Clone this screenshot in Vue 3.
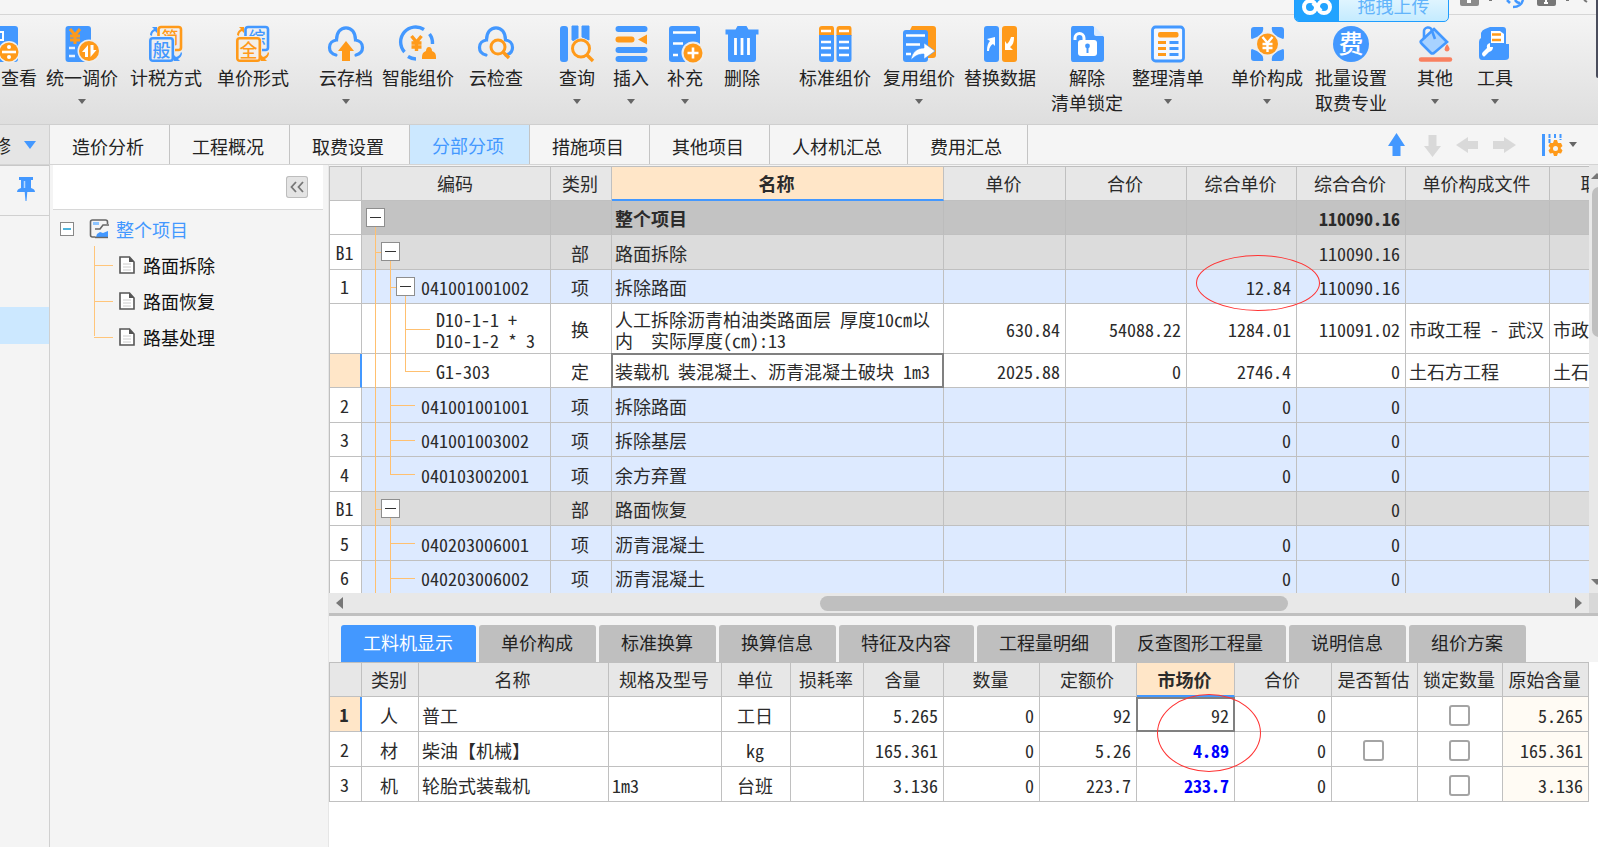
<script setup>
import { ref } from 'vue'

const B = '#4398ff'
const O = '#ff9a1a'
const yen = (x, y, c, w = 2) =>
  `<path d="M${x - 5} ${y - 7}l5 6l5 -6M${x} ${y - 1}v9M${x - 5} ${y}h10M${x - 5} ${y + 4}h10" fill="none" stroke="${c}" stroke-width="${w}"/>`
const glyph = (x, y, size, c, t) =>
  `<text x="${x}" y="${y}" font-size="${size}" fill="${c}" text-anchor="middle" font-weight="500" font-family="Noto Sans CJK SC, sans-serif">${t}</text>`
const cloud = `<path d="M8 29C3.500 28 1.500 25 1.500 21.500C1.500 17.500 4.500 14.500 8.500 14C8.500 6.500 12.500 1.800 18 1.800S27.500 6.500 27.500 14C31.500 14.500 34.500 17.500 34.500 21.500C34.500 25 32 28 28 29" fill="none" stroke="${B}" stroke-width="3.200" stroke-linecap="round"/>`

const art = {
  view: `<rect x="1" width="34" height="36" rx="3" fill="${B}"/><path d="M14 6h6v8h-6" fill="none" stroke="#fff" stroke-width="2"/><circle cx="26" cy="26" r="11" fill="#f0f0f0"/><circle cx="26" cy="26" r="9.500" fill="${O}"/><path d="M19 26h14" stroke="#fff" stroke-width="2.600"/><circle cx="26" cy="21" r="2" fill="#fff"/><circle cx="26" cy="31" r="2" fill="#fff"/>`,
  adjust: `<rect x="1.500" width="25.500" height="36" rx="3" fill="${B}"/>${yen(11, 10, O, 3)}<path d="M5 22h6M5 30h6" stroke="#e6f1ff" stroke-width="2.400"/><circle cx="25" cy="25" r="11.500" fill="#eee"/><circle cx="25" cy="25" r="10" fill="${O}"/><path d="M24 31v-12l-6 7h3v5zM26.500 19v12l6 -7h-3v-5z" fill="#fff"/>`,
  tax: `<rect x="10.500" y="1" width="22.500" height="23" rx="2.500" fill="none" stroke="${O}" stroke-width="2.600"/>${glyph(22, 18, 17, O, '简')}<rect x="0" y="10" width="27" height="26" rx="3" fill="#ececec"/><rect x="2.300" y="12.300" width="22.500" height="22.500" rx="2.500" fill="#eee" stroke="${B}" stroke-width="2.600"/>${glyph(13.5, 30.5, 18, B, '般')}<path d="M2 9c0-3 2-5 4-6l-2-2l5 0v6l-2-2c-2 1-3 2-3 5zM34 27c0 3-2 5-4 6l2 2h-6v-6l2 2c3-1 4-2 5-5z" fill="${B}"/>`,
  price: `<rect x="10.500" y="1" width="22.500" height="23" rx="2.500" fill="none" stroke="${B}" stroke-width="2.600"/>${glyph(22, 18, 17, B, '综')}<rect x="0" y="10" width="27" height="26" rx="3" fill="#ececec"/><rect x="2.300" y="12.300" width="22.500" height="22.500" rx="2.500" fill="#f3efe8" stroke="${O}" stroke-width="2.600"/>${glyph(13.5, 30.5, 18, O, '全')}<path d="M2 9c0-3 2-5 4-6l-2-2l5 0v6l-2-2c-2 1-3 2-3 5zM34 27c0 3-2 5-4 6l2 2h-6v-6l2 2c3-1 4-2 5-5z" fill="${O}"/>`,
  cloudUp: `${cloud}<path d="M18 15l8 10h-4v10h-8v-10h-4z" fill="${O}"/>`,
  smart: `<path d="M4.500 26A15 15 0 0 1 24 3.500M29.500 8A15 15 0 0 1 32.500 18M8 30.500A15 15 0 0 0 16 33" fill="none" stroke="${B}" stroke-width="3.400"/>${yen(16.5, 17, O, 3.4)}<path d="M29 21c2 0 3 2 3 4c3 1 4 3 4 6v2h-14v-2c0-3 1-5 4-6c0-2 1-4 3-4z" fill="${O}"/>`,
  cloudFind: `${cloud}<circle cx="20" cy="21" r="8.500" fill="#eee"/><circle cx="20" cy="21" r="7" fill="none" stroke="${O}" stroke-width="3"/><path d="M25 26l6 6" stroke="${O}" stroke-width="3.400"/>`,
  query: `<rect x="1" width="8" height="36" rx="3" fill="${B}"/><path d="M13 0h6v16l-6-2zM23 0h7v14l-7-3z" fill="${B}" stroke="${B}"/><circle cx="22" cy="22.500" r="10.500" fill="#eee"/><circle cx="22" cy="22.500" r="8.500" fill="none" stroke="${O}" stroke-width="3"/><path d="M28 29l6 6" stroke="${O}" stroke-width="3.400"/>`,
  insert: `<path d="M5.500 3h26M5.500 24h26M5.500 33h26" stroke="${B}" stroke-width="6" stroke-linecap="round"/><path d="M5.500 13.500h13" stroke="${O}" stroke-width="6" stroke-linecap="round"/><path d="M25 13.500l9 -5v10z" fill="${O}"/>`,
  append: `<rect x="2" width="31" height="36" rx="3" fill="${B}"/><path d="M6 6.500h23M6 17.500h10M6 29h5" stroke="#fff" stroke-width="2.600"/><circle cx="26" cy="27" r="11.500" fill="#eee"/><circle cx="26" cy="27" r="9.500" fill="${O}"/><path d="M20.500 27h11M26 21.500v11" stroke="#fff" stroke-width="2.600"/>`,
  remove: `<path d="M1.500 3.500h10l2-3.500h9l2 3.500h10v5h-33zM4 8h28v25q0 3 -3 3h-22q-3 0 -3 -3z" fill="${B}"/><path d="M11.500 12v17M18 12v17M24.500 12v17" stroke="#fff" stroke-width="2.800"/>`,
  standard: `<path d="M2 10v-7q0-3 3-3h10q2 0 2 3v7zM19.500 10v-7q0-3 3-3h10q2 0 2 3v7z" fill="${O}"/><path d="M2 9h15v24q0 3 -2 3h-10q-3 0 -3-3zM19.500 9h15v24q0 3 -2 3h-10q-3 0 -3-3z" fill="${B}"/><path d="M4 5h10M22 5h10M4 16h10M22 16h10M4 22h10M22 22h10M4 29h10M22 29h10" stroke="#fff" stroke-width="2.400"/>`,
  reuse: `<path d="M11 0h21q3 0 3 3v26q0 3 -3 3h-10v-26h-14z" fill="${O}"/><rect x="2" y="4" width="25" height="32" rx="3" fill="${B}"/><path d="M5 9.500h19M5 18.500h14M5 28h5" stroke="#fff" stroke-width="2.400"/><path d="M10 34c1-8 6-12 13-12v-5l11 8l-11 8v-5c-6 0-9 2-13 6z" fill="#fff" stroke="${B}" stroke-width=".6"/>`,
  replace: `<rect x="2" width="15" height="36" rx="3" fill="${B}"/><rect x="20" width="15" height="36" rx="3" fill="${O}"/><path d="M5 25c0-5 1-8 3-10l-3-2l8-2v9l-2-2c-2 1-4 4-4 7zM32 11c0 5-1 8-4 10l3 3h-8v-9l2 3c2-2 3-4 4-7z" fill="#fff"/>`,
  unlock: `<path d="M4 0h20l11 11v22q0 3-3 3h-28q-2 0-2-3v-30q0-3 2-3z" fill="${B}"/><path d="M25 0l10 10h-8q-2 0-2-2z" fill="#dcecff"/><path d="M15 16v-4a4.500 4.500 0 0 0 -9 0v2" fill="none" stroke="#fff" stroke-width="3"/><rect x="9" y="14" width="19" height="16" rx="3" fill="#fff"/><circle cx="18.500" cy="20" r="2.400" fill="${B}"/><path d="M18.500 20v7" stroke="${B}" stroke-width="2"/>`,
  tidy: `<rect x="2.500" y="1" width="31" height="34" rx="3" fill="#f4f8ff" stroke="${B}" stroke-width="2.800"/><rect x="8" y="6" width="20.500" height="5.500" rx="2" fill="${O}"/><path d="M8 16.500h8M8 22.500h8M8 28.500h8" stroke="${O}" stroke-width="2.800"/><path d="M19.500 16.500h9M19.500 22.500h9M19.500 28.500h9" stroke="${B}" stroke-width="2.800"/>`,
  compose: `<path d="M5 1h9q2 8-11 12q-1 0-1-2v-7q0-3 3-3zM32 1h-9q-2 8 11 12q1 0 1-2v-7q0-3-3-3zM5 35h9q2-8-11-12q-1 0-1 2v7q0 3 3 3zM32 35h-9q-2-8 11-12q1 0 1 2v7q0 3-3 3z" fill="${B}"/><circle cx="18.500" cy="18" r="12" fill="#eee"/><circle cx="18.500" cy="18" r="10.500" fill="${O}"/>${yen(18.5, 18, '#fff', 2.4)}`,
  fee: `<circle cx="18" cy="18" r="18" fill="${B}"/>${glyph(18, 26.5, 25, '#fff', '费')}`,
  other: `<path d="M17 3l13 13l-13 11q-2 1-3 0l-9-9q-2-2-1-3z" fill="#a8d2ff" stroke="${B}" stroke-width="2.600"/><path d="M7 13v-7a4 4 0 0 1 8-1l3 8" fill="none" stroke="${B}" stroke-width="2.600"/><path d="M30 18q3 4 2.500 5.500a2.600 2.600 0 0 1 -5 0q0-2 2.500-5.500z" fill="#f9805f"/><path d="M4 33.500h29" stroke="#f9805f" stroke-width="4.400" stroke-linecap="round"/>`,
  tool: `<path d="M4 7q1-3 4-4l5-2h13q3 0 3 3v14h3v13q0 3-4 3h-23q-3 0-3-4v-14q0-3 2-4z" fill="${B}"/><path d="M14 5h9l4 3v9h-13z" fill="#fff"/><path d="M15 8.500h9M15 14h9" stroke="${O}" stroke-width="2.600"/><path d="M6 30q-2-2 0-4l4-4q-1-4 3-5v4h3q0 4-4 5l-4 4q-1 1-2 0z" fill="#fff"/>`,
}

const ribbon = [
  { icon: 'view', lines: ['查看'], gap: 'cut' },
  { icon: 'adjust', lines: ['统一调价'], caret: true, gap: 'g9' },
  { icon: 'tax', lines: ['计税方式'], gap: 'g12' },
  { icon: 'price', lines: ['单价形式'], gap: 'g15' },
  { icon: 'cloudUp', lines: ['云存档'], caret: true, gap: 'g30' },
  { icon: 'smart', lines: ['智能组价'], gap: 'g9' },
  { icon: 'cloudFind', lines: ['云检查'], gap: 'g15' },
  { icon: 'query', lines: ['查询'], caret: true, gap: 'g36' },
  { icon: 'insert', lines: ['插入'], caret: true, gap: 'g18' },
  { icon: 'append', lines: ['补充'], caret: true, gap: 'g18' },
  { icon: 'remove', lines: ['删除'], gap: 'g21' },
  { icon: 'standard', lines: ['标准组价'], gap: 'g39' },
  { icon: 'reuse', lines: ['复用组价'], caret: true, gap: 'g12' },
  { icon: 'replace', lines: ['替换数据'], gap: 'g9' },
  { icon: 'unlock', lines: ['解除', '清单锁定'], gap: 'g15' },
  { icon: 'tidy', lines: ['整理清单'], caret: true, gap: 'g9' },
  { icon: 'compose', lines: ['单价构成'], caret: true, gap: 'g27' },
  { icon: 'fee', lines: ['批量设置', '取费专业'], gap: 'g12' },
  { icon: 'other', lines: ['其他'], caret: true, gap: 'g30' },
  { icon: 'tool', lines: ['工具'], caret: true, gap: 'g24' },
]

const tabs = ['造价分析', '工程概况', '取费设置', '分部分项', '措施项目', '其他项目', '人材机汇总', '费用汇总']
const activeTab = ref('分部分项')

const children = ['路面拆除', '路面恢复', '路基处理']

const mainCols = ['', '编码', '类别', '名称', '单价', '合价', '综合单价', '综合合价', '单价构成文件', '取费']
// lines: tree guides of the code cell; box: depth of the collapse button
const rows = [
  { no: '', kind: 'total', box: 1, lines: ['v1 low'], name: '整个项目', sum: '110090.16' },
  { no: 'B1', kind: 'part', box: 2, lines: ['v1', 'h1 short', 'v2 low'], type: '部', name: '路面拆除', sum: '110090.16' },
  { no: '1', kind: 'item', box: 3, lines: ['v1', 'v2', 'h2 short', 'v3 low'], depth: 2, code: '041001001002', type: '项', name: '拆除路面', unit: '12.84', sum: '110090.16', mark: true },
  { no: '', kind: 'quota tall', lines: ['v1', 'v2', 'v3', 'h3'], depth: 3, code: 'D10-1-1 +\nD10-1-2 * 3', type: '换', name: '人工拆除沥青柏油类路面层 厚度10㎝以\n内  实际厚度(㎝):13', price: '630.84', amount: '54088.22', unit: '1284.01', sum: '110091.02', file: '市政工程 - 武汉', major: '市政工程' },
  { no: '', kind: 'quota current', lines: ['v1', 'v2', 'v3 high', 'h3'], depth: 3, code: 'G1-303', type: '定', name: '装载机 装混凝土、沥青混凝土破块 1m3', price: '2025.88', amount: '0', unit: '2746.4', sum: '0', file: '土石方工程', major: '土石方工程' },
  { no: '2', kind: 'item', lines: ['v1', 'v2', 'h2'], depth: 2, code: '041001001001', type: '项', name: '拆除路面', unit: '0', sum: '0' },
  { no: '3', kind: 'item', lines: ['v1', 'v2', 'h2'], depth: 2, code: '041001003002', type: '项', name: '拆除基层', unit: '0', sum: '0' },
  { no: '4', kind: 'item', lines: ['v1', 'v2 high', 'h2'], depth: 2, code: '040103002001', type: '项', name: '余方弃置', unit: '0', sum: '0' },
  { no: 'B1', kind: 'part', box: 2, lines: ['v1', 'h1 short', 'v2 low'], type: '部', name: '路面恢复', sum: '0' },
  { no: '5', kind: 'item', lines: ['v1', 'v2', 'h2'], depth: 2, code: '040203006001', type: '项', name: '沥青混凝土', unit: '0', sum: '0' },
  { no: '6', kind: 'item', lines: ['v1', 'v2', 'h2'], depth: 2, code: '040203006002', type: '项', name: '沥青混凝土', unit: '0', sum: '0' },
]

const detailTabs = ['工料机显示', '单价构成', '标准换算', '换算信息', '特征及内容', '工程量明细', '反查图形工程量', '说明信息', '组价方案']
const activeDetail = ref('工料机显示')
const detailCols = ['', '类别', '名称', '规格及型号', '单位', '损耗率', '含量', '数量', '定额价', '市场价', '合价', '是否暂估', '锁定数量', '原始含量']
const details = ref([
  { no: 1, type: '人', name: '普工', spec: '', unit: '工日', content: '5.265', quota: '92', market: '92', locked: false },
  { no: 2, type: '材', name: '柴油【机械】', spec: '', unit: 'kg', content: '165.361', quota: '5.26', market: '4.89', estimate: false, locked: false },
  { no: 3, type: '机', name: '轮胎式装载机', spec: '1m3', unit: '台班', content: '3.136', quota: '223.7', market: '233.7', locked: false },
])
</script>

<template>
  <div class="app">
    <header class="titlebar">
      <svg class="sysicons" viewBox="0 0 148 15" aria-hidden="true">
        <path d="M10 0h19v4q0 2-2 2h-15q-2 0-2-2z" fill="#8b8b8b" /><path d="M17 0h4v3h-4z" fill="#fff" />
        <path d="M39 0h3" stroke="#777" stroke-width="2" />
        <path d="M57 0l3 3M63 7q8 0 10-7M65 0q2 3 5 3" fill="none" stroke="#4398ff" stroke-width="2.500" />
        <path d="M87 0h19v4q0 2-2 2h-15q-2 0-2-2z" fill="#777" /><path d="M94 3h4M96 0v2" stroke="#fff" stroke-width="2" />
        <path d="M116 0h3M134 0l3 2" stroke="#777" stroke-width="2" />
      </svg>
      <button class="upload" type="button">
        <span class="upload-mark">
          <svg viewBox="0 0 30 18" aria-hidden="true">
            <circle cx="8" cy="11" r="6" fill="none" stroke="#fff" stroke-width="4" /><circle cx="22" cy="11" r="6" fill="none" stroke="#fff" stroke-width="4" />
            <path d="M11 7l8 8" stroke="#fff" stroke-width="4" />
          </svg>
        </span>
        <span class="upload-text">拖拽上传</span>
      </button>
    </header>
    <i class="window-edge"></i>

    <div class="ribbon">
      <button v-for="it in ribbon" :key="it.icon" type="button" class="tool" :class="it.gap">
        <svg class="tool-icon" viewBox="0 0 36 36" aria-hidden="true" v-html="art[it.icon]"></svg>
        <span v-for="l in it.lines" :key="l" class="tool-text">{{ l }}</span>
        <i v-if="it.caret" class="caret"></i>
      </button>
    </div>

    <div class="tabbar">
      <button class="project" type="button"><span>修</span><i class="caret blue"></i></button>
      <nav class="tabs">
        <button v-for="t in tabs" :key="t" type="button" class="tab" :class="{ on: t === activeTab }" @click="activeTab = t">{{ t }}</button>
      </nav>
      <div class="moves">
        <button type="button" aria-label="上移"><svg viewBox="0 0 24 24"><path d="M12.500 0l8.500 13h-4.500v10h-8v-10h-4.500z" fill="#4398ff" /></svg></button>
        <button type="button" aria-label="下移"><svg viewBox="0 0 24 24"><path d="M12.500 24l8.500 -11h-4.500v-11h-8v11h-4.500z" fill="#d9d9d9" /></svg></button>
        <button type="button" aria-label="左移"><svg viewBox="0 0 24 24"><path d="M0 12l12 -8v4h10v8h-10v4z" fill="#d9d9d9" /></svg></button>
        <button type="button" aria-label="右移"><svg viewBox="0 0 24 24"><path d="M24 12l-12 -8v4h-11v8h11v4z" fill="#d9d9d9" /></svg></button>
        <button type="button" class="setup" aria-label="显示设置">
          <svg viewBox="0 0 24 24">
            <path d="M3.500 1v22" stroke="#4398ff" stroke-width="3" /><path d="M9.500 1v9M15 1v5M20.500 1v6" stroke="#4398ff" stroke-width="2" stroke-dasharray="4 1" />
            <path d="M14 7h3l1 3l3 0l1.500 3l-2 2l2 2.500l-1.500 3l-3-.5l-1 3h-3l-1-3l-3 .5l-1.500-3l2-2.500l-2-2l1.500-3l3 0z" fill="#ff9a1a" /><circle cx="15.500" cy="15.500" r="2.500" fill="#f4f4f4" />
          </svg>
          <i class="caret"></i>
        </button>
      </div>
    </div>

    <main class="body">
      <aside class="rail">
        <button class="pin" type="button" aria-label="固定">
          <svg viewBox="0 0 20 24"><path d="M3 0h14v3h-2v8q4 1 4 4h-18q0-3 4-4v-8h-2z" fill="#4398ff" /><path d="M8.500 4v7" stroke="#b5d8ff" stroke-width="1.500" /><path d="M8.700 15h2.600l-.8 9h-1z" fill="#4398ff" /></svg>
        </button>
        <div class="rail-row"></div>
        <div class="rail-row on"></div>
      </aside>

      <aside class="side">
        <div class="side-head">
          <button type="button" aria-label="收起"><svg viewBox="0 0 22 22"><path d="M10 6l-4.500 5l4.500 5M17 6l-4.500 5l4.500 5" fill="none" stroke="#777" stroke-width="1.800" /></svg></button>
        </div>
        <ul class="tree">
          <li class="root">
            <button type="button" class="fold" aria-label="折叠"></button>
            <svg class="root-icon" viewBox="0 0 20 20"><path d="M18.500 5v-2q0-2-2-2h-13q-2 0-2 2v13q0 2 2 2h3" fill="none" stroke="#666" stroke-width="1.600" /><path d="M4 4.500h6" stroke="#8cc4ff" stroke-width="3" /><path d="M6 10h5l3-4h6" fill="none" stroke="#666" stroke-width="1.600" /><path d="M8 15l3-2l3 1l5-2v6h-12z" fill="#4398ff" /><path d="M6 18.500h13" stroke="#666" stroke-width="1.400" /></svg>
            <span>整个项目</span>
          </li>
          <li v-for="c in children" :key="c" class="leaf">
            <svg class="leaf-icon" viewBox="0 0 16 18"><path d="M1 1h9.500l4.500 5v11h-14z" fill="#fff" stroke="#555" stroke-width="1.600" /><path d="M10 1v5h5z" fill="#555" /><path d="M4 8h8M4 11h8M4 14h8" stroke="#ccc" /></svg>
            <span>{{ c }}</span>
          </li>
        </ul>
      </aside>

      <section class="work">
        <div class="upper">
          <div class="grid-view">
            <div class="grid-clip">
              <table class="grid main-grid">
                <colgroup><col v-for="(c, i) in mainCols" :key="i" :class="'m' + i" /></colgroup>
                <thead>
                  <tr><th v-for="(c, i) in mainCols" :key="i" :class="{ picked: c === '名称' }">{{ c }}</th></tr>
                </thead>
                <tbody>
                  <tr v-for="(r, i) in rows" :key="i" :class="r.kind">
                    <td class="no">{{ r.no }}</td>
                    <td class="code" :class="'d' + (r.depth || 0)">
                      <i v-for="l in r.lines" :key="l" class="line" :class="l"></i>
                      <button v-if="r.box" type="button" class="box" :class="'b' + r.box" aria-label="折叠"></button>
                      <span>{{ r.code }}</span>
                    </td>
                    <td class="mid">{{ r.type }}</td>
                    <td class="name">{{ r.name }}</td>
                    <td class="num">{{ r.price }}</td>
                    <td class="num">{{ r.amount }}</td>
                    <td class="num">{{ r.unit }}<i v-if="r.mark" class="ring ring-a"></i></td>
                    <td class="num">{{ r.sum }}</td>
                    <td>{{ r.file }}</td>
                    <td>{{ r.major }}</td>
                  </tr>
                </tbody>
              </table>
            </div>
            <div class="vbar"><i class="up"></i><i class="vthumb"></i><i class="down"></i></div>
          </div>
          <div class="hbar">
            <i class="left"></i><div class="htrack"><i class="hthumb"></i></div><i class="right"></i><i class="corner"></i>
          </div>
        </div>

        <div class="lower">
          <nav class="detail-tabs">
            <button v-for="t in detailTabs" :key="t" type="button" :class="{ on: t === activeDetail }" @click="activeDetail = t">{{ t }}</button>
          </nav>
          <div class="detail-body">
            <table class="grid detail-grid">
              <colgroup><col v-for="(c, i) in detailCols" :key="i" :class="'k' + i" /></colgroup>
              <thead>
                <tr><th v-for="(c, i) in detailCols" :key="i" :class="{ picked: c === '市场价' }">{{ c }}</th></tr>
              </thead>
              <tbody>
                <tr v-for="(d, i) in details" :key="d.no" :class="{ current: i === 0 }">
                  <td class="no">{{ d.no }}</td>
                  <td class="mid">{{ d.type }}</td>
                  <td>{{ d.name }}</td>
                  <td>{{ d.spec }}</td>
                  <td class="mid">{{ d.unit }}</td>
                  <td></td>
                  <td class="num">{{ d.content }}</td>
                  <td class="num">0</td>
                  <td class="num">{{ d.quota }}</td>
                  <td class="num market" :class="{ changed: i > 0 }">{{ d.market }}<i v-if="i === 0" class="ring ring-b"></i></td>
                  <td class="num">0</td>
                  <td class="mid"><input v-if="'estimate' in d" v-model="d.estimate" type="checkbox" aria-label="是否暂估" /></td>
                  <td class="mid"><input v-model="d.locked" type="checkbox" aria-label="锁定数量" /></td>
                  <td class="num origin">{{ d.content }}</td>
                </tr>
              </tbody>
            </table>
          </div>
        </div>
      </section>
    </main>
  </div>
</template>

<style>
html, body { background: #f4f4f4; overflow: hidden; }
</style>

<style scoped>
.app { position: relative; display: flex; flex-direction: column; height: 100vh; overflow: hidden; background: #f4f4f4; color: #222; font: 18px/24px "Noto Sans CJK SC", sans-serif; }
button { margin: 0; padding: 0; border: 0; background: none; color: inherit; font: inherit; }
svg { display: block; }
.caret { width: 0; height: 0; border: 4px solid transparent; border-top: 5px solid #666; border-bottom: 0; }

.titlebar { display: flex; justify-content: flex-end; flex: none; height: 14px; background: #f5f5f5; border-bottom: 1px solid #d6d6d6; }
.sysicons { width: 148px; height: 15px; }
.window-edge { position: absolute; top: 0; right: 0; width: 2px; height: 78px; background: #4a4d5c; border-radius: 0 0 0 3px; z-index: 3; }
.upload { position: absolute; top: -14px; right: 149px; z-index: 2; display: flex; width: 155px; height: 36px; border: 1px solid #1f9dff; border-radius: 5px; overflow: hidden; background: linear-gradient(#f0faff, #c4ebff); }
.upload-mark { display: flex; align-items: center; justify-content: center; width: 44px; height: 36px; background: #22a3ff; }
.upload-mark svg { width: 30px; height: 18px; overflow: visible; }
.upload-text { flex: 1; color: #62b4fb; line-height: 36px; }

.ribbon { display: flex; align-items: flex-start; flex: none; height: 109px; padding-left: 1px; background: linear-gradient(#f4f4f4, #dedede); border-bottom: 1px solid #cfcfcf; }
.tool { display: flex; flex-direction: column; align-items: center; flex: none; padding-top: 11px; }
.tool-icon { width: 36px; height: 36px; margin-bottom: 3px; overflow: visible; }
.tool-text { line-height: 25px; white-space: nowrap; }
.tool .caret { margin-top: 9px; }
.cut { width: 72px; margin-left: -36px; }
.cut .tool-text { align-self: flex-end; }
.g9 { margin-left: 9px; }
.g12 { margin-left: 12px; }
.g15 { margin-left: 15px; }
.g18 { margin-left: 18px; }
.g21 { margin-left: 21px; }
.g24 { margin-left: 24px; }
.g27 { margin-left: 27px; }
.g30 { margin-left: 30px; }
.g36 { margin-left: 36px; }
.g39 { margin-left: 39px; }

.tabbar { display: flex; flex: none; height: 39px; border-bottom: 1px solid #d4d4d4; background: #f5f5f5; }
.project { display: flex; align-items: center; width: 50px; border-right: 1px solid #d0d0d0; background: #e5e5e5; overflow: hidden; }
.project span { margin-left: -7px; }
.caret.blue { margin-left: 13px; border-width: 8px 6px 0; border-top-color: #4398ff; }
.tabs { display: flex; }
.tab { padding: 2px 25px 0 22px; border-right: 1px solid #c4c4c4; white-space: nowrap; }
.tab.on { padding-top: 0; background: #cce8ff; color: #4398ff; }
.moves { display: flex; align-items: center; gap: 12px; margin-left: auto; padding-right: 21px; }
.moves svg { width: 24px; height: 24px; }
.setup { display: flex; align-items: center; gap: 5px; margin-left: 12px; }

.body { display: flex; flex: 1; min-height: 0; }
.rail { flex: none; box-sizing: border-box; width: 50px; border-right: 1px solid #d0d0d0; background: #f4f4f4; }
.pin { display: flex; width: 100%; height: 51px; padding: 11px 0 0 16px; box-sizing: border-box; border-top: 1px solid #c8c8c8; border-bottom: 1px solid #d0d0d0; }
.pin svg { width: 20px; height: 24px; }
.rail-row { height: 37px; margin-top: 54px; }
.rail-row.on { margin-top: 0; background: #cce8ff; }

.side { flex: none; box-sizing: border-box; width: 279px; padding: 0 5px 0 3px; border-right: 1px solid #e6e6e6; background: #f4f4f4; }
.side-head { display: flex; align-items: center; justify-content: flex-end; height: 44px; padding-right: 15px; background: #fff; border-bottom: 1px solid #d8d8d8; }
.side-head button { width: 22px; height: 22px; border-radius: 3px; background: #e4e4e4; box-shadow: 0 0 0 1px #bdbdbd inset; }
.tree { position: relative; margin: 1px 0 0; padding: 0; list-style: none; color: #111; }
.tree::before { content: ""; position: absolute; left: 41px; top: 35px; height: 90px; border-left: 1px solid #ffc57a; }
.root, .leaf { display: flex; align-items: center; height: 36px; }
.root { padding-left: 7px; color: #4398ff; }
.root span { margin-left: 7px; }
.fold { position: relative; width: 14px; height: 14px; border: 1px solid #888; background: #fff; }
.fold::before { content: ""; position: absolute; left: 2px; top: 5px; width: 8px; height: 2px; background: #4fb4dc; }
.root-icon { width: 20px; height: 20px; margin-left: 15px; }
.leaf { padding-left: 41px; }
.leaf::before { content: ""; width: 19px; border-top: 1px solid #ffc57a; }
.leaf-icon { width: 16px; height: 18px; margin: 0 8px 0 6px; }

.work { display: flex; flex-direction: column; flex: 1; min-width: 0; }
.upper { display: flex; flex-direction: column; flex: 450 1 0; min-height: 0; border-bottom: 3px solid #c0c0c0; box-sizing: border-box; }
.grid-view { display: flex; flex: 1; min-height: 0; }
.grid-clip { flex: 1; min-width: 0; padding-top: 1px; overflow: hidden; }
.grid { table-layout: fixed; width: max-content; border-spacing: 0; border-top: 1px solid #bfbfbf; border-left: 1px solid #bfbfbf; background: #fff; color: #2b2b2b; font: 18px/21px "Noto Sans Mono CJK SC", "Noto Sans CJK SC", monospace; }
.grid th, .grid td { position: relative; box-sizing: border-box; height: 34px; padding: 2px 5px 0 3px; border-right: 1px solid #c0c0c0; border-bottom: 1px solid #c0c0c0; white-space: pre; font-weight: 400; }
.grid th { padding: 0 2px 0 0; background: #e7e7e7; }
.grid tbody tr:nth-child(even) td { height: 35px; }
.grid th.picked { background: #ffe6c8; border-bottom: 2px solid #4398ff; font-weight: 700; }
.grid td.no { padding: 0 2px 0 0; background: #fff; text-align: center; }
.grid .mid { padding: 2px 2px 0 0; text-align: center; }
.grid .num { text-align: right; }
.grid .current .no { background: #ffe6c8; border-right: 2px solid #4398ff; font-weight: 700; }
.main-grid { width: 1321px; }
.m0 { width: 32px; } .m1 { width: 189px; } .m2 { width: 61px; } .m3 { width: 332px; } .m4 { width: 122px; }
.m5 { width: 121px; } .m6 { width: 110px; } .m7 { width: 109px; } .m8 { width: 144px; } .m9 { width: 100px; }
.total td { background: #c3c3c3; border-right-color: #bcbcbc; font-weight: 700; }
.part td { background: #dcdcdc; }
.item td { background: #ddeaff; }
.main-grid tbody tr.tall td { height: 50px; }
.current .name::after, .current .market::after { content: ""; position: absolute; inset: -1px; z-index: 2; border: 2px solid #808080; }
.current .market::after { top: 0; }

.code.d2 { padding-left: 59px; }
.code.d3 { padding-left: 74px; }
.line { position: absolute; top: 0; bottom: -1px; width: 1px; background: #ffc070; z-index: 1; }
.v1 { left: 13px; }
.v2 { left: 28px; }
.v3 { left: 43px; }
.line.low { top: 50%; }
.line.high { bottom: 50%; }
.line.h1, .line.h2, .line.h3 { top: 50%; bottom: auto; width: 25px; height: 1px; }
.h1 { left: 13px; }
.h2 { left: 28px; }
.h3 { left: 43px; }
.line.short { width: 8px; }
.box { position: absolute; top: 7px; z-index: 2; width: 19px; height: 19px; border: 1px solid #8e8e8e; background: #fff; }
.box::before { content: ""; position: absolute; left: 3px; top: 8px; width: 11px; height: 1px; background: #333; }
.b1 { left: 4px; }
.b2 { left: 19px; }
.b3 { left: 34px; }

.ring { position: absolute; z-index: 3; border: 1px solid #f33; border-radius: 50%; box-sizing: border-box; }
.ring-a { left: 9px; top: -15px; width: 124px; height: 56px; }
.ring-b { left: 20px; top: -3px; width: 104px; height: 78px; }

.vbar { position: relative; flex: none; width: 9px; overflow: hidden; background: #e8e8e8; }
.vthumb { position: absolute; left: 3px; top: 22px; width: 14px; height: 150px; border-radius: 7px; background: #bfbfbf; }
.up, .down { position: absolute; left: 2px; border: 6px solid transparent; }
.up { top: 8px; border-top: 0; border-bottom-color: #777; }
.down { bottom: 8px; border-bottom: 0; border-top-color: #777; }
.hbar { display: flex; align-items: center; flex: none; height: 20px; background: #e8e8e8; }
.left, .right { width: 0; height: 0; border: 6px solid transparent; }
.left { margin-left: 7px; border-left: 0; border-right: 7px solid #777; }
.right { margin-right: 7px; border-right: 0; border-left: 7px solid #777; }
.corner { width: 9px; height: 20px; background: #d8d8d8; }
.htrack { display: flex; flex: 1; padding-left: 477px; }
.hthumb { width: 468px; height: 15px; border-radius: 8px; background: #bfbfbf; }

.lower { display: flex; flex-direction: column; flex: 232 1 0; min-height: 0; }
.detail-tabs { display: flex; gap: 3px; padding: 9px 0 0 12px; }
.detail-tabs button { height: 37px; padding: 0 23px 3px 22px; border-radius: 3px 3px 0 0; background: #bfbfbf; white-space: nowrap; }
.detail-tabs .on { background: #4398ff; color: #fff; }
.detail-body { flex: 1; background: #fff; }
.detail-grid { width: 1260px; }
.grid.detail-grid td { height: 35px; }
.k0 { width: 32px; } .k1 { width: 57px; } .k2 { width: 190px; } .k3 { width: 113px; } .k4 { width: 69px; }
.k5 { width: 73px; } .k6 { width: 80px; } .k7 { width: 96px; } .k8 { width: 97px; } .k9 { width: 98px; }
.k10 { width: 97px; } .k11 { width: 86px; } .k12 { width: 85px; } .k13 { width: 86px; }
.changed { color: #00f; }
.grid td.changed { font-weight: 700; }
.origin { background: #fffbf4; }
input[type="checkbox"] { appearance: none; display: block; width: 21px; height: 21px; margin: 0 auto; border: 2px solid #a4a4a4; border-radius: 3px; background: #fff; }
input[type="checkbox"]:checked { background: #4398ff; }
</style>
